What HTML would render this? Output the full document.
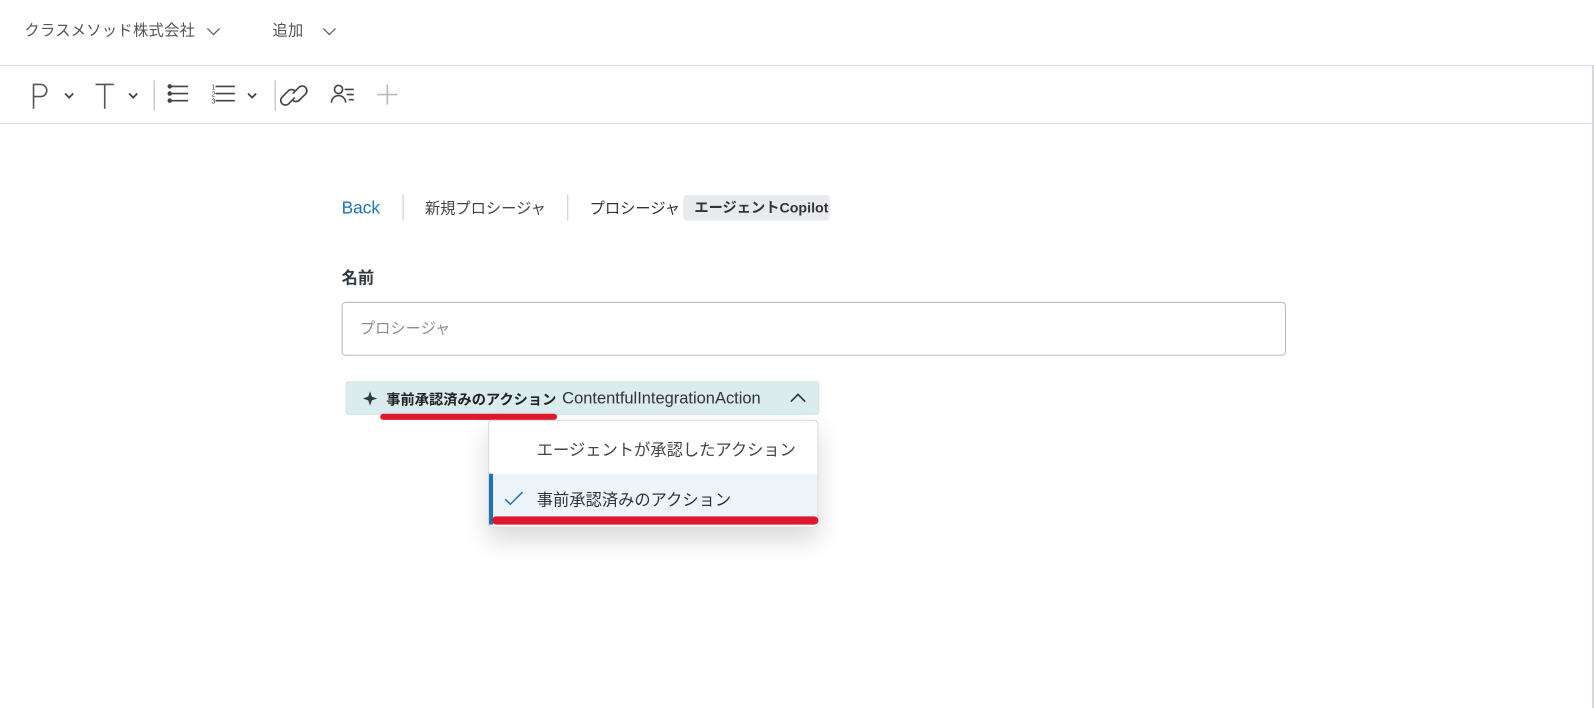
<!DOCTYPE html>
<html><head><meta charset="utf-8"><style>
*{box-sizing:border-box;margin:0;padding:0}
body{width:1594px;height:708px;background:#fff;font-family:"Liberation Sans","Noto Sans CJK JP",sans-serif;position:relative;overflow:hidden;color:#333}
#w{position:absolute;left:0;top:0;width:1568px;height:697px;transform:scale(1.0166);transform-origin:0 0}
.abs{position:absolute;line-height:20px;white-space:nowrap}
.top{font-size:15px;color:#555;top:21px;letter-spacing:.3px}
.hl{left:0;width:1568px;height:1px;background:#d9d9d9}
.ic{position:absolute}
</style></head><body>
<div id="w">
<div class="abs top" style="left:24px">クラスメソッド株式会社</div>
<svg class="ic" style="left:203px;top:26px" width="14" height="10"><path d="M1 2l6 6 6-6" fill="none" stroke="#666" stroke-width="1.3"/></svg>
<div class="abs top" style="left:268px">追加</div>
<svg class="ic" style="left:317px;top:26px" width="14" height="10"><path d="M1 2l6 6 6-6" fill="none" stroke="#666" stroke-width="1.3"/></svg>
<div class="abs hl" style="top:64px"></div>
<div class="abs hl" style="top:121px"></div>
<svg class="ic" style="left:0;top:66px" width="420" height="54">
<g fill="none" stroke="#555" stroke-width="1.6">
<path d="M33 41V17h7a6 6 0 0 1 0 12h-7"/>
<path d="M64 26l4 4 4-4" stroke="#444" stroke-width="1.8"/>
<path d="M94 17h18M103 17v24"/>
<path d="M127 26l4 4 4-4" stroke="#444" stroke-width="1.8"/>
<path d="M165 19h20M165 26h20M165 33h20" stroke="#444"/>
<path d="M212 19h19M212 26h19M212 33h19" stroke="#444"/>
<path d="M244 26l4 4 4-4" stroke="#444" stroke-width="1.8"/>
<path d="M290 30l-6 6a4.5 4.5 0 0 1-6.5-6.5l6-6a4.5 4.5 0 0 1 6.5 0M288 26l6-6a4.5 4.5 0 0 1 6.5 6.5l-6 6a4.5 4.5 0 0 1-6.5 0" stroke="#444"/>
<circle cx="333" cy="22" r="4" stroke="#444"/>
<path d="M326 35a7 7 0 0 1 14 0M339 22h9M341 27h7M343 32h5" stroke="#444"/>
<path d="M381 17v20M371 27h20" stroke="#bbb"/>
</g>
<g fill="#444"><circle cx="167" cy="19" r="2.2"/><circle cx="167" cy="26" r="2.2"/><circle cx="167" cy="33" r="2.2"/></g>
<text x="208" y="22" font-size="7" fill="#444" font-family="Liberation Sans">1</text>
<text x="208" y="29" font-size="7" fill="#444" font-family="Liberation Sans">2</text>
<text x="208" y="36" font-size="7" fill="#444" font-family="Liberation Sans">3</text>
<rect x="151" y="13" width="1.5" height="30" fill="#ccc"/>
<rect x="270" y="13" width="1.5" height="30" fill="#ccc"/>
</svg>
<div class="abs" style="left:336px;top:195px;font-size:17px;color:#1f73b7">Back</div>
<div class="abs" style="left:396px;top:191px;width:1px;height:26px;background:#c8c8c8"></div>
<div class="abs" style="left:418px;top:196px;font-size:15px;color:#444">新規プロシージャ</div>
<div class="abs" style="left:558px;top:191px;width:1px;height:26px;background:#c8c8c8"></div>
<div class="abs" style="left:580px;top:196px;font-size:15px;color:#333">プロシージャ</div>
<div class="abs" style="left:672px;top:192px;width:144px;height:25px;background:#e8eaed;border-radius:3px;font-size:14px;font-weight:bold;color:#333;padding:2px 0 0 11px">エージェントCopilot</div>
<div class="abs" style="left:336px;top:265px;font-size:16px;font-weight:bold;color:#2f3941">名前</div>
<div class="abs" style="left:336px;top:297px;width:929px;height:53px;border:1px solid #b9bcc0;border-radius:4px;font-size:15px;color:#8a8f95;padding:16px 0 0 17px">プロシージャ</div>
<div class="abs" style="left:340px;top:375px;width:466px;height:33px;background:#daeced;border:1px solid #cfe2e3;border-radius:3px"></div>
<svg class="ic" style="left:356px;top:384px" width="16" height="16"><path d="M8 1l1.8 5.2L15 8l-5.2 1.8L8 15l-1.8-5.2L1 8l5.2-1.8z" fill="#2f3941"/></svg>
<div class="abs" style="left:380px;top:383px;font-size:14px;font-weight:bold;color:#222">事前承認済みのアクション</div>
<div class="abs" style="left:553px;top:382px;font-size:16.2px;color:#333">ContentfulIntegrationAction</div>
<svg class="ic" style="left:777px;top:386px" width="16" height="12"><path d="M1 9l7-7 7 7" fill="none" stroke="#333" stroke-width="1.6"/></svg>
<div class="abs" style="left:374px;top:407px;width:174px;height:6px;background:#e0182d;border-radius:3px"></div>
<div class="abs" style="left:480px;top:413px;width:325px;height:106px;background:#fff;border:1px solid #d8dcde;border-radius:4px;box-shadow:0 12px 24px rgba(0,0,0,.15)"></div>
<div class="abs" style="left:528px;top:434px;font-size:16px;color:#444">エージェントが承認したアクション</div>
<div class="abs" style="left:481px;top:466px;width:323px;height:50px;background:#edf4fa"></div>
<div class="abs" style="left:481px;top:466px;width:4px;height:50px;background:#1f73b7"></div>
<svg class="ic" style="left:496px;top:482px" width="20" height="16"><path d="M1 9l5 5L18 2" fill="none" stroke="#1f73b7" stroke-width="1.5"/></svg>
<div class="abs" style="left:528px;top:483px;font-size:16px;color:#333">事前承認済みのアクション</div>
<div class="abs" style="left:484px;top:508px;width:321px;height:8px;background:#e0182d;border-radius:4px"></div>
</div>
<div style="position:absolute;left:1592px;top:65px;width:2px;height:643px;background:#d5d7da"></div>
</body></html>
